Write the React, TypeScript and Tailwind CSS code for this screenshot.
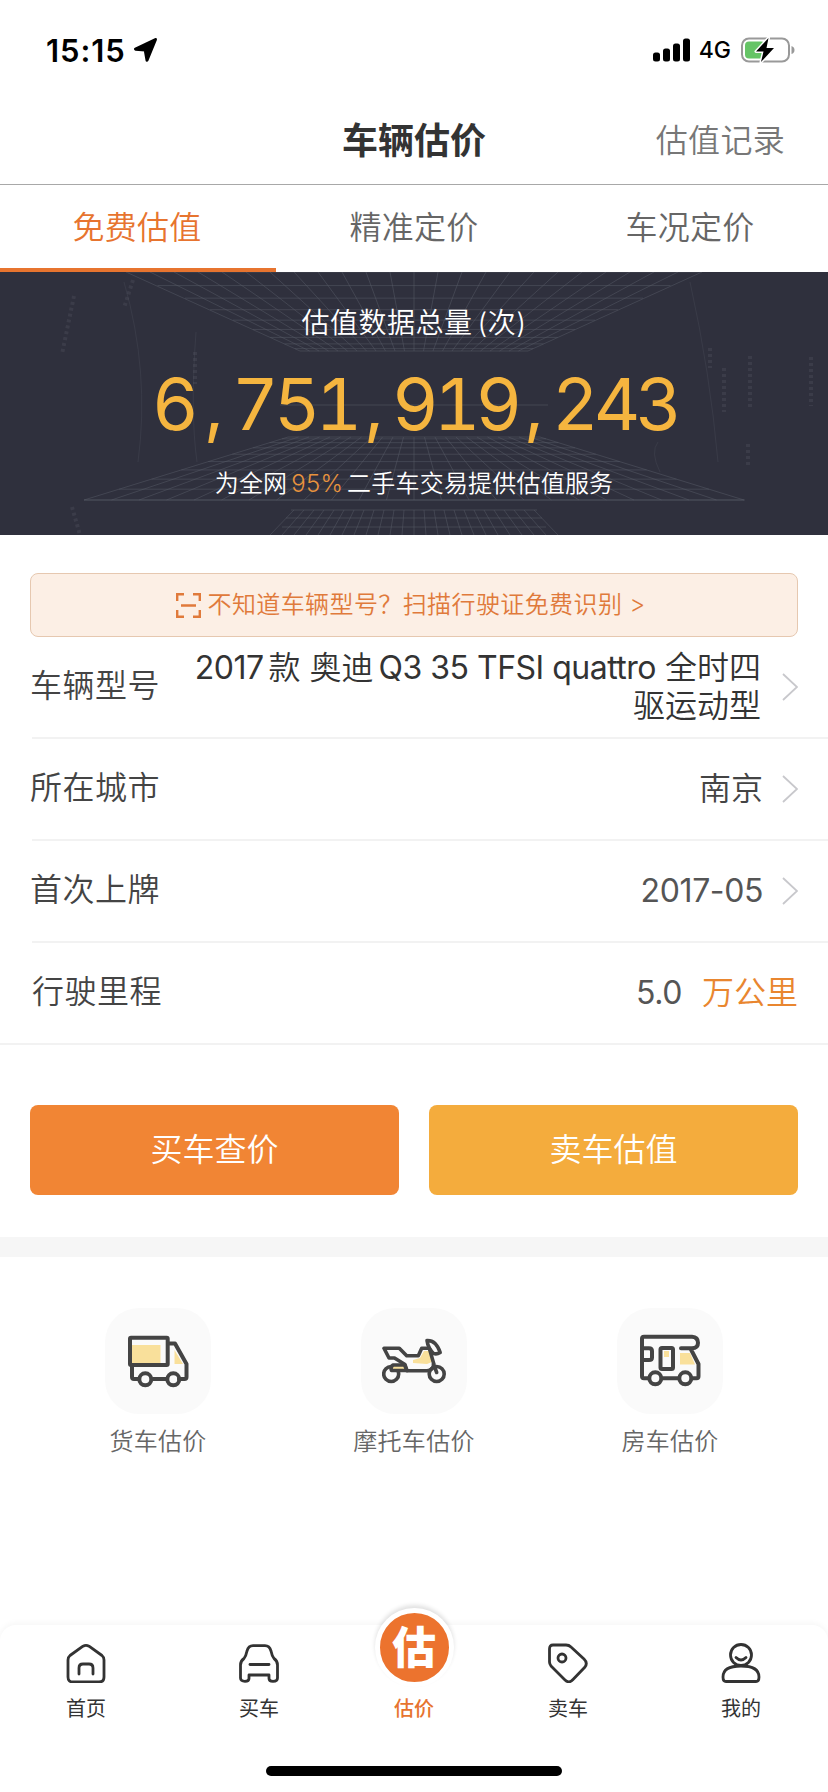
import type { ReactNode } from 'react'
import clsx from 'clsx'

const tabs = ['免费估值', '精准定价', '车况定价']

function StatusBar() {
  return (
    <div className="h-24 flex items-center justify-between pl-[46px] pr-[33px] pt-1 text-black">
      <div className="flex items-center gap-[7px]">
        <span className="text-[31px] leading-none font-semibold tracking-[0.900px]">15:15</span>
        <svg className="w-[26px] h-[26px]" viewBox="0 0 26 26">
          <path d="M22.500 2.500 2.500 12.200 12.200 13 14 23.300Z" fill="#000" stroke="#000" strokeWidth="3" strokeLinejoin="round" />
        </svg>
      </div>
      <div className="flex items-center">
        <svg className="w-[38px] h-6" viewBox="0 0 38 24">
          <rect x="0" y="14.500" width="7" height="9" rx="2.500" />
          <rect x="10" y="10.500" width="7" height="13" rx="2.500" />
          <rect x="20" y="5.500" width="7" height="18" rx="2.500" />
          <rect x="30" y="0.500" width="7" height="23" rx="2.500" />
        </svg>
        <span className="ml-2 text-[23px] leading-none font-medium">4G</span>
        <svg className="ml-[10px] w-[54px] h-[26px]" viewBox="0 0 54 26">
          <rect x="1" y="1.500" width="47" height="23" rx="7" fill="none" stroke="#999" strokeWidth="2" />
          <path d="M50.500 9q3 1 3 4t-3 4Z" fill="#999" />
          <rect x="4" y="4.500" width="20" height="17" rx="4" fill="#65c466" />
          <path d="M27.500 1 15 14.500H22.500L20 25 33 11H25.500Z" fill="#000" stroke="#fff" strokeWidth="3" strokeLinejoin="round" paintOrder="stroke" />
        </svg>
      </div>
    </div>
  )
}

function BannerGrid() {
  const cols = Array.from({ length: 25 }, (_, i) => i - 12)
  const rows = [0, 1, 2, 3, 4, 5, 6, 7, 8, 9]
  return (
    <svg className="absolute inset-0 w-full h-full" viewBox="0 0 828 263" fill="none" stroke="#585b68" strokeOpacity="0.5">
      {cols.map(i => (
        <g key={i}>
          <path d={`M${414 + i * 24} 0L${414 + i * 9.500} 79`} />
          <path d={`M${414 + i * 10.500} 165L${414 + i * 27.500} 228`} />
          <path d={`M${414 + i * 10} 238L${414 + i * 12} 263`} />
        </g>
      ))}
      {rows.map(i => {
        const t = 1 - Math.pow(1 - i / 9, 1.600)
        const y = 79 * t
        const half = 286 - 172 * t
        const y2 = 165 + 63 * Math.pow(i / 9, 1.600)
        const half2 = 126 + 204 * Math.pow(i / 9, 1.600)
        return (
          <g key={i}>
            <path d={`M${414 - half} ${y}H${414 + half}`} />
            <path d={`M${414 - half2} ${y2}H${414 + half2}`} />
          </g>
        )
      })}
      <path d="M84 228H745" />
      <path d="M291 238H537M286 246H542M282 255H546M280 133H548" />
      <g strokeWidth="4" strokeDasharray="3 3" strokeOpacity="0.3">
        <path d="M74 24 62 82M133 8 124 36M195 80V112M724 96V140M750 84V135M811 85V134M710 76V96M748 172V194M72 235 80 263" />
      </g>
      <g strokeOpacity="0.25">
        <path d="M124 10Q150 100 138 190M196 60Q190 140 197 190M690 10Q710 100 718 190M658 170Q650 180 660 200" />
      </g>
    </svg>
  )
}

function Banner() {
  return (
    <div className="relative h-[263px] bg-[#2f303d] text-white">
      <BannerGrid />
      <div className="relative flex flex-col items-center">
        <p className="mt-[33px] h-9 leading-9 text-[28px] tracking-[0.500px]">估值数据总量<span className="ml-[5px]">(次)</span></p>
        <div className="mt-[19px] h-[88px] flex text-[#f5b53f] text-[72px] leading-[88px] font-normal">
          {'6,751,919,243'.split(/(,)/).map((part, i) => (
            part === ','
              ? <span key={i} className="w-10 text-center">,</span>
              : <span key={i} className={clsx('tabular-nums tracking-[-5px] -ml-[2px] mr-[2px]', part.length === 1 ? 'w-10' : 'w-[120px]')}>{part}</span>
          ))}
        </div>
        <p className="mt-[20px] h-8 leading-8 text-[24px] tracking-[0.200px]">
          为全网<span className="mx-[4px] text-[#e8933d]">95%</span>二手车交易提供估值服务
        </p>
      </div>
    </div>
  )
}

function Arrow() {
  return (
    <svg className="w-4 h-7 shrink-0" viewBox="0 0 16 28" fill="none" stroke="#c8c8cc" strokeWidth="1.800">
      <path d="M1 1 15 14 1 27" />
    </svg>
  )
}

function Row({ label, children, last }: { label: string; children: ReactNode; last?: boolean }) {
  return (
    <div className={clsx('h-[102px]', !last && 'pl-8')}>
      <div className={clsx('h-full flex items-center justify-between border-b-2 border-[#f2f2f2] pr-[30px]', last && 'pl-[34px]')}>
        <span className="text-[32px] tracking-[0.500px] text-[#444] shrink-0 -ml-[2px] pb-[2px]">{label}</span>
        {children}
      </div>
    </div>
  )
}

function TruckIcon() {
  return (
    <svg className="-mt-[6px] w-16 h-16" viewBox="0 0 64 64" fill="none" stroke="#444" strokeWidth="4" strokeLinejoin="round" strokeLinecap="round">
      <path d="M6 19H34.500V37H6ZM48.500 24V38H57Z" fill="#f9e09b" stroke="none" />
      <rect x="4" y="11.700" width="37.700" height="27.300" rx="1" />
      <path d="M42 17.500H49L60.500 38V51Q60.500 53 58.500 53H53M40 53H27M12 53H8Q6 53 6 51V40" />
      <circle cx="19.300" cy="53.300" r="6" />
      <circle cx="47.300" cy="53.300" r="6" />
    </svg>
  )
}

function MotoIcon() {
  return (
    <svg className="-mt-[6px] w-16 h-16" viewBox="0 0 64 64" fill="none" stroke="#444" strokeWidth="3.600" strokeLinejoin="round" strokeLinecap="round">
      <path d="M31 37V34L38 32 42 25H48L50 36 45 38Z" fill="#f9e09b" stroke="none" />
      <circle cx="9.200" cy="48" r="7.500" />
      <circle cx="54.700" cy="48" r="7.500" />
      <path d="M2 22.300H17.300L24.700 29.700H36.300L39.700 22.300H47.300L51.700 37.500Q51.500 44.700 45 44.700H25L23 38.500 12.500 32H7Z" />
      <path d="M11 39H22.500L25 44.500H9.500Q8 41 11 39Z" fill="#f9e09b" />
      <path d="M45 14.500Q54 14 58.200 26.500 55 28.500 51.500 27.500 46 22 45 14.500ZM51.500 38 54.700 46.500" />
    </svg>
  )
}

function CamperIcon() {
  return (
    <svg className="-mt-[6px] w-16 h-16" viewBox="0 0 64 64" fill="none" stroke="#444" strokeWidth="4" strokeLinejoin="round" strokeLinecap="round">
      <path d="M42 27H52L57 38.500H42ZM26 25H31V31H26Z" fill="#f9e09b" stroke="none" />
      <path d="M11 52.300H6Q4 52.300 4 50.300V12.700Q4 10.700 6 10.700H54Q60 11 60 16.800Q60 22.300 54 22.300H43M53 23.500 60.500 38V50.300Q60.500 52.300 58.500 52.300H54M40 52.300H25M4 22.300H11Q14 22.300 14 25V31.500Q14 34 11 34H4" />
      <rect x="22.500" y="22" width="12.500" height="21" rx="1.500" />
      <circle cx="17.300" cy="52.300" r="6" />
      <circle cx="47.300" cy="52.300" r="6" />
    </svg>
  )
}

function Service({ label, children }: { label: string; children: ReactNode }) {
  return (
    <div className="w-64 flex flex-col items-center">
      <div className="w-[106px] h-[106px] rounded-[34px] bg-[#fafafa] flex items-center justify-center">{children}</div>
      <span className="mt-[10px] leading-9 text-[24px] tracking-[0.300px] text-[#666]">{label}</span>
    </div>
  )
}

const navIcons: Record<string, ReactNode> = {
  首页: (
    <>
      <path d="M4 12.500 17 3.200Q20 1.500 23 3.200L36 12.500Q38 14 38 17V34Q38 39 33 39H7Q2 39 2 34V17Q2 14 4 12.500Z" />
      <path d="M13 31V25Q13 21 17 21H23Q27 21 27 25V31" />
    </>
  ),
  买车: (
    <>
      <path d="M10 32V35.500Q10 38.300 6 38.300Q1.500 38.300 1.500 35V22Q1.500 18 5 15.500Q7 13 8 8Q9.500 2.700 14 2.700H26Q30.500 2.700 32 8Q33 13 35 15.500Q38.500 18 38.500 22V35Q38.500 38.300 34 38.300Q30 38.300 30 35.500V32Z" />
      <path d="M11 21.500H30" />
    </>
  ),
  卖车: (
    <>
      <path d="M5 2H18Q21 2 23 4L36 16Q40 20 37 24L25 36.500Q21 41 17 37L3 23Q1.500 21 1.500 19V6Q1.500 2 5 2Z" />
      <circle cx="14" cy="15" r="4" />
    </>
  ),
  我的: (
    <>
      <circle cx="20" cy="12" r="10.500" />
      <path d="M5 38.500H35Q38 38.500 38 34Q38 23 20 23Q2 23 2 34Q2 38.500 5 38.500ZM15 14.500Q20 19.500 25 14.500" />
    </>
  ),
}

function NavItem({ label }: { label: string }) {
  return (
    <div className="flex flex-col items-center pt-[18px] text-[#333]">
      <svg className="w-10 h-10" viewBox="0 0 40 40" fill="none" stroke="currentColor" strokeWidth="2.800" strokeLinecap="round" strokeLinejoin="round">
        {navIcons[label]}
      </svg>
      <span className="mt-[12px] leading-7 text-[20px] font-normal">{label}</span>
    </div>
  )
}

export default function App() {
  return (
    <div className="w-[828px] h-[1792px] flex flex-col bg-white overflow-hidden font-[350] font-[Inter,'Noto_Sans_CJK_SC',sans-serif]">
      <StatusBar />

      {/* Header */}
      <header className="h-[89px] pt-[2px] grid grid-cols-3 items-center border-b border-[#a8a8a8]">
        <span />
        <h1 className="text-center text-[36px] font-bold text-[#333]">车辆估价</h1>
        <span className="text-right pr-[43px] text-[32px] tracking-[0.300px] text-[#777]">估值记录</span>
      </header>

      {/* Tabs */}
      <nav className="h-[87px] grid grid-cols-3">
        {tabs.map((t, i) => (
          <div key={t} className={clsx(
            'flex items-center justify-center pt-[2px] text-[32px] tracking-[0.300px] border-b-4',
            i === 0 ? 'text-[#e7742f] border-[#e7742f] pr-[2px]' : 'text-[#666] border-transparent',
          )}>
            {t}
          </div>
        ))}
      </nav>

      <Banner />

      {/* License scan hint */}
      <div className="mt-[38px] mx-[30px] h-16 shrink-0 rounded-lg border border-[#e6c8b0] bg-[#fcefe5] flex items-center justify-center pr-[6px] text-[24px] text-[#e07a3b] tracking-[0.400px]">
        <svg className="w-[25px] h-[25px] mr-[6px]" viewBox="0 0 25 25" fill="none" stroke="currentColor" strokeWidth="2.400">
          <path d="M1.200 8V1.200H8M17 1.200H23.800V8M23.800 17V23.800H17M8 23.800H1.200V17M5 12.500H20" />
        </svg>
        <span>不知道车辆型号？扫描行驶证免费识别 &gt;</span>
      </div>

      {/* Form */}
      <div>
        <Row label="车辆型号">
          <div className="flex items-center gap-[21px]">
            <span className="w-[580px] text-right text-[32px] leading-[38px] text-[#333]">
              <span className="tracking-[-0.500px] mr-[5px] font-normal">2017</span>款 奥迪
              <span className="tracking-[-0.500px] ml-[5px] font-normal">Q3 35 TFSI quattro</span> 全时四驱运动型
            </span>
            <Arrow />
          </div>
        </Row>
        <Row label="所在城市">
          <div className="flex items-center gap-[19px] text-[32px] text-[#444]">南京<Arrow /></div>
        </Row>
        <Row label="首次上牌">
          <div className="flex items-center gap-[19px] text-[32px] tracking-[-0.400px] font-normal text-[#555]">2017-05<Arrow /></div>
        </Row>
        <Row label="行驶里程" last>
          <div className="flex items-center gap-5 text-[32px] text-[#555]">
            <span className="tracking-[-0.400px] font-normal">5.0</span>
            <span className="text-[#e9862f]">万公里</span>
          </div>
        </Row>
      </div>

      <div className="mt-[60px] mx-[30px] grid grid-cols-2 gap-[30px] text-[32px] text-white">
        <button className="h-[90px] rounded-lg bg-[#f18534]">买车查价</button>
        <button className="h-[90px] rounded-lg bg-[#f4ac3d]">卖车估值</button>
      </div>

      <div className="mt-[42px] h-5 shrink-0 bg-[#f6f6f6]" />

      {/* Other vehicle types */}
      <div className="mt-[51px] flex justify-center">
        <Service label="货车估价"><TruckIcon /></Service>
        <Service label="摩托车估价"><MotoIcon /></Service>
        <Service label="房车估价"><CamperIcon /></Service>
      </div>

      {/* Bottom nav */}
      <footer className="mt-auto h-[167px] shrink-0 flex flex-col justify-between items-center rounded-t-2xl shadow-[0_-2px_6px_rgba(0,0,0,0.04)]">
        <div className="w-full grid grid-cols-[172px_174px_136px_172px_174px]">
          <NavItem label="首页" />
          <NavItem label="买车" />
          <div className="flex flex-col items-center text-[#e7742f]">
            <div className="-mt-[17px] w-[79px] h-[79px] rounded-full border-[5px] border-white bg-[#ec732e] shadow-[0_-3px_4px_rgba(0,0,0,0.12)] flex items-center justify-center text-white text-[44px] leading-none font-black">估</div>
            <span className="mt-[8px] leading-7 text-[20px] font-medium">估价</span>
          </div>
          <NavItem label="卖车" />
          <NavItem label="我的" />
        </div>
        <div className="mb-4 w-[296px] h-[10px] rounded-full bg-black" />
      </footer>
    </div>
  )
}
